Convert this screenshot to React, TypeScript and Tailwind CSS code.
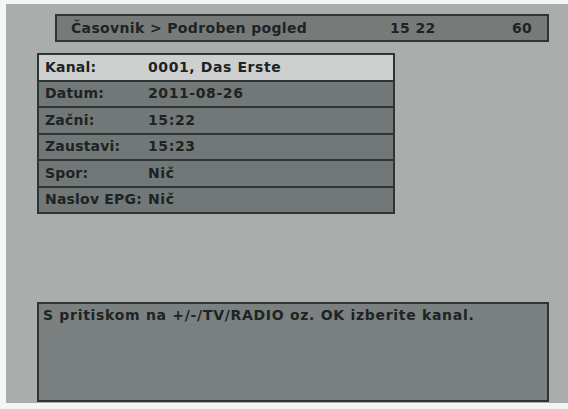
import React from 'react';

interface Row {
  label: string;
  value: string;
  active?: boolean;
}

const ROWS: Row[] = [
  { label: 'Kanal:', value: '0001, Das Erste', active: true },
  { label: 'Datum:', value: '2011-08-26' },
  { label: 'Začni:', value: '15:22' },
  { label: 'Zaustavi:', value: '15:23' },
  { label: 'Spor:', value: 'Nič' },
  { label: 'Naslov EPG:', value: 'Nič' },
];

const App: React.FC = () => {
  return (
    <div className="w-[568px] h-[409px] bg-[#f4f5f5] pl-[6px] pt-[4px] pb-[6px] flex flex-col overflow-hidden font-['DejaVu_Sans',sans-serif] text-[#1e2323]">
      <div className="flex-1 bg-[#a9adac] flex flex-col pl-[31px]">
        {/* Title bar */}
        <div className="mt-[10px] ml-[18px] w-[494px] h-[28px] bg-[#767b7a] border-2 border-[#2f3534] flex items-center text-[14px] font-bold tracking-[0.35px]">
          <span className="pl-[14px] w-[333px] whitespace-nowrap">Časovnik &gt; Podroben pogled</span>
          <span className="w-[122px]">15 22</span>
          <span>60</span>
        </div>

        {/* Detail table */}
        <div className="mt-[11px] w-[358px] border-2 border-[#2f3534] flex flex-col bg-[#2f3534] gap-[2px] text-[14px] font-bold">
          {ROWS.map((row) => (
            <div
              key={row.label}
              className={`h-[24.5px] flex items-center ${row.active ? 'bg-[#cdd0cf]' : 'bg-[#727877]'}`}
            >
              <span className="pl-[6px] w-[109px] shrink-0 whitespace-nowrap tracking-[0.2px]">{row.label}</span>
              <span className="whitespace-nowrap tracking-[0.6px]">{row.value}</span>
            </div>
          ))}
        </div>

        <div className="flex-1" />

        {/* Help box */}
        <div className="mb-[1px] w-[512px] h-[100px] bg-[#7b8080] border-2 border-[#2f3534] px-[4px] pt-[1px] text-[14px] font-bold tracking-[0.7px]">
          S pritiskom na +/-/TV/RADIO oz. OK izberite kanal.
        </div>
      </div>
    </div>
  );
};

export default App;
